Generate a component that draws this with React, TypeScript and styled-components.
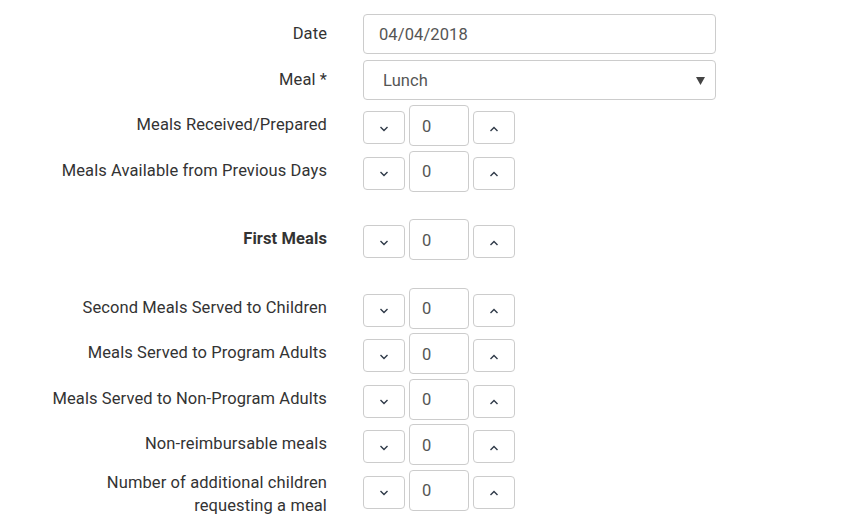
import React from "react";
import styled, { createGlobalStyle } from "styled-components";

const Global = createGlobalStyle`
  html, body { margin: 0; padding: 0; background: #fff; }
  body { font-family: Roboto, "Liberation Sans", Arial, sans-serif; color: #333; }
  * { box-sizing: border-box; }
`;

const Form = styled.div`
  display: flex;
  flex-direction: column;
  padding-top: 14px;
`;

const Row = styled.div<{ $spaced?: boolean }>`
  display: grid;
  grid-template-columns: 327px 353px;
  column-gap: 36px;
  align-items: start;
  height: 40px;
  margin-bottom: ${(p) => (p.$spaced ? "28.5px" : "5.5px")};
  margin-top: ${(p) => (p.$spaced ? "23px" : "0")};
`;

const Label = styled.label<{ $bold?: boolean; $tight?: boolean }>`
  text-align: right;
  font-size: 16.5px;
  letter-spacing: 0.1px;
  line-height: 23px;
  padding-top: ${(p) => (p.$tight ? "1px" : "8px")};
  font-weight: ${(p) => (p.$bold ? 700 : 400)};
  color: #333;
  white-space: nowrap;
`;

const TextBox = styled.div`
  height: 40px;
  border: 1px solid #ccc;
  border-radius: 4px;
  padding: 0 15px;
  display: flex;
  align-items: center;
  font-size: 16.5px;
  letter-spacing: 0.1px;
  color: #555;
`;

const SelectBox = styled(TextBox)`
  padding: 2px 10px 0 19px;
  justify-content: space-between;
`;

const Stepper = styled.div`
  display: flex;
  align-items: flex-start;
  gap: 4px;
`;

const StepButton = styled.button`
  margin-top: 6px;
  width: 42px;
  height: 33px;
  border: 1px solid #ccc;
  border-radius: 4px;
  background: #fff;
  display: flex;
  align-items: center;
  justify-content: center;
  padding: 0;
`;

const NumberBox = styled.div`
  width: 60px;
  height: 41px;
  border: 1px solid #ccc;
  border-radius: 4px;
  padding: 1px 0 0 12px;
  display: flex;
  align-items: center;
  font-size: 16.5px;
  color: #555;
`;

const Chevron = ({ up }: { up?: boolean }) => (
  <svg width="10" height="6" viewBox="0 0 10 6" style={{ marginTop: 2 }}>
    <polyline
      points={up ? "1.5,5 5,1.5 8.5,5" : "1.5,1 5,4.5 8.5,1"}
      fill="none"
      stroke="#2f3a48"
      strokeWidth="1.4"
    />
  </svg>
);

const Caret = () => (
  <svg width="9" height="8" viewBox="0 0 9 8">
    <polygon points="0,0 9,0 4.5,8" fill="#444" />
  </svg>
);

const StepRow = ({
  label,
  bold,
  spaced,
  tight,
}: {
  label: React.ReactNode;
  bold?: boolean;
  spaced?: boolean;
  tight?: boolean;
}) => (
  <Row $spaced={spaced}>
    <Label $bold={bold} $tight={tight}>
      {label}
    </Label>
    <Stepper>
      <StepButton>
        <Chevron />
      </StepButton>
      <NumberBox>0</NumberBox>
      <StepButton>
        <Chevron up />
      </StepButton>
    </Stepper>
  </Row>
);

export default function App() {
  return (
    <>
      <Global />
      <Form>
        <Row>
          <Label>Date</Label>
          <TextBox>04/04/2018</TextBox>
        </Row>
        <Row>
          <Label>Meal *</Label>
          <SelectBox>
            <span>Lunch</span>
            <Caret />
          </SelectBox>
        </Row>
        <StepRow label="Meals Received/Prepared" />
        <StepRow label="Meals Available from Previous Days" />
        <StepRow label="First Meals" bold spaced />
        <StepRow label="Second Meals Served to Children" />
        <StepRow label="Meals Served to Program Adults" />
        <StepRow label="Meals Served to Non-Program Adults" />
        <StepRow label="Non-reimbursable meals" />
        <StepRow
          tight
          label={
            <>
              Number of additional children
              <br />
              requesting a meal
            </>
          }
        />
      </Form>
    </>
  );
}
